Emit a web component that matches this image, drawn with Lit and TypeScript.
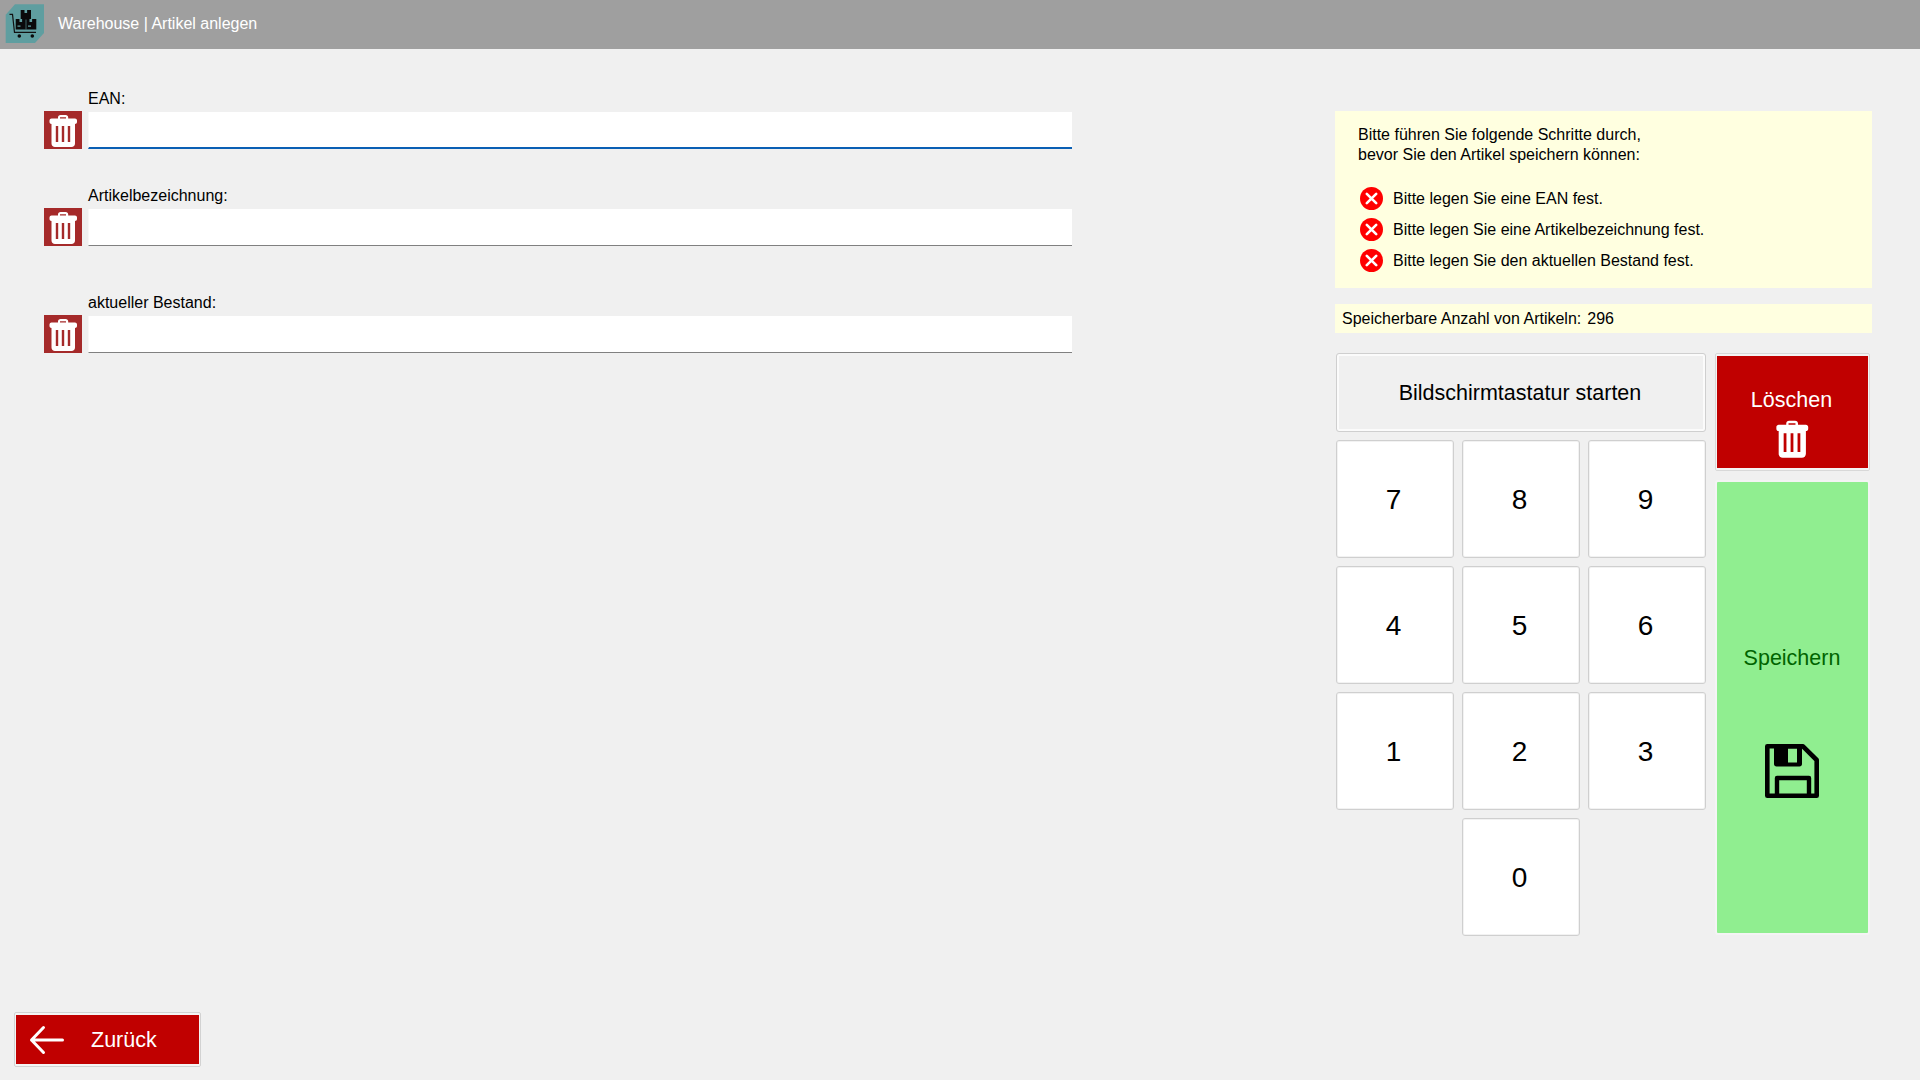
import { LitElement, html, css } from "lit";
import { customElement } from "lit/decorators.js";

const trash = (size: number, slot: string) => html`<svg width=${size} height=${size} viewBox="0 0 38 38" aria-hidden="true">
  <path fill="white" d="M14 6.600C14 5 15 4 16.600 4h5c1.600 0 2.600 1 2.600 2.600V7.500h6.800c1 0 2 .8 2 2v1.500c0 1.200-.8 2-2 2v19.500c0 2-1.500 3.500-3.500 3.500H11c-2 0-3.500-1.500-3.500-3.500V13c-1.200 0-2-.8-2-2V9.500c0-1.200 1-2 2-2H14z"/>
  <path fill=${slot} d="M16 6.300h6V7.500h-6zM11.800 15h2.400v16h-2.400zM17.800 15h2.400v16h-2.400zM23.800 15h2.400v16h-2.400z"/>
</svg>`;

const errorIcon = html`<svg class="err" width="23" height="23" viewBox="0 0 23 23" aria-hidden="true">
  <circle cx="11.500" cy="11.500" r="11.500" fill="#f00"/>
  <path d="M6.800 6.800l9.400 9.400M16.200 6.800l-9.400 9.400" stroke="#fff" stroke-width="2.600" stroke-linecap="round"/>
</svg>`;

const logo = html`<svg width="40" height="40" viewBox="0 0 40 40" aria-hidden="true">
  <path fill="#5f9ea0" d="M10 .3H39V29L30 39H.7V10.700z"/>
  <path fill="none" stroke="#111" stroke-width="1.200" d="M4.500 10.300H7.500L9.500 28.300H31"/>
  <path fill="#0a0a0a" d="M15.700 6H26V15H31.300V25.500H10.700V15H15.700z"/>
  <circle fill="#0a0a0a" cx="14.300" cy="32" r="1.800"/><circle fill="#0a0a0a" cx="27.300" cy="32" r="1.800"/>
  <path fill="#5f9ea0" d="M19.500 6h2.600v3h-2.600zM14.500 15h2.600v3h-2.600zM24.500 15h2.600v3h-2.600zM12.500 21.500h3v1.300h-3zM23 21.500h3v1.300h-3z"/>
  <path stroke="#5f9ea0" stroke-width=".6" d="M21 15.500V25.500"/>
</svg>`;

const disk = html`<svg width="56" height="56" viewBox="-1 -1 56 56" aria-hidden="true">
  <path fill="none" stroke="#000" stroke-width="4.600" stroke-linejoin="round" d="M2.300 2.300H38L51.700 16V51.700H2.300z"/>
  <path fill-rule="evenodd" fill="#000" d="M9 1H37V20C37 21.500 36 22.500 34.500 22.500H11.500C10 22.500 9 21.500 9 20zM23 4.500V18.500H32V4.500z"/>
  <path fill="none" stroke="#000" stroke-width="4.400" stroke-linejoin="round" d="M12 52V34H44V52"/>
</svg>`;

const arrow = html`<svg width="36" height="30" viewBox="0 0 36 30" aria-hidden="true">
  <path fill="none" stroke="#fff" stroke-width="3" stroke-linecap="round" stroke-linejoin="round" d="M33.500 15H2.500M14.500 2.500L2.500 15L14.500 27.500"/>
</svg>`;

@customElement("app-root")
export class AppRoot extends LitElement {
  static styles = css`
    :host {
      display: flex;
      flex-direction: column;
      width: 1920px;
      height: 1080px;
      background: #f0f0f0;
      color: #000;
      font-family: "Liberation Sans", Arial, sans-serif;
      font-size: 16px;
      overflow: hidden;
    }
    * { box-sizing: border-box; }
    .header {
      height: 49px;
      flex: none;
      background: #9f9f9f;
      display: flex;
      align-items: center;
      padding-left: 5px;
      gap: 13px;
      color: #fff;
    }
    .header span { margin-bottom: 2px; }
    .header svg { display: block; flex: none; margin-bottom: 1px; }
    .main {
      flex: 1;
      display: flex;
      justify-content: space-between;
      padding: 0 48px 0 44px;
      min-height: 0;
    }
    .form { width: 1028px; padding-top: 39px; }
    .field { margin-bottom: 36px; }
    .field.last { margin-top: 46px; }
    .label { height: 23px; line-height: 21px; padding-left: 44px; }
    .field-row { display: flex; gap: 6px; height: 38px; }
    .tile {
      width: 38px; height: 38px; background: #a52a2a; flex: none;
    }
    .tile svg { display: block; }
    .input {
      flex: 1;
      height: 37px;
      margin-top: 1px;
      background: #fff;
      border: 0;
      border-left: 1px solid #f8f8f8;
      border-bottom: 1px solid #808080;
      padding: 0 8px;
      outline: none;
      font: inherit;
    }
    .input.focus { border-bottom: 2px solid #0a5fb4; }
    .side { width: 537px; padding-top: 62px; }
    .notice {
      background: #ffffe0;
      height: 177px;
      padding: 14px 23px;
      line-height: 20px;
    }
    .notice .intro { margin-bottom: 18px; }
    .check {
      display: flex;
      align-items: center;
      gap: 10px;
      height: 31px;
      padding-left: 2px;
    }
    .check span { margin-top: 1px; }
    .err { display: block; flex: none; }
    .count {
      background: #ffffe0;
      height: 29px;
      margin-top: 16px;
      line-height: 29px;
      padding-left: 7px;
    }
    .count span { margin-left: 6px; }
    .pad {
      display: grid;
      grid-template-columns: 372px 155px;
      column-gap: 7px;
      margin-top: 20px;
      margin-left: 1px;
    }
    .keys {
      display: grid;
      grid-template-columns: repeat(3, 118px);
      grid-template-rows: 79px repeat(4, 118px);
      gap: 8px;
      align-content: start;
    }
    .btn {
      font: inherit;
      color: #000;
      border: 1px solid #cfcfcf;
      border-radius: 3px;
      padding: 0;
      margin: 0;
      cursor: pointer;
    }
    .key {
      background: #fff;
      font-size: 28px;
      padding: 2px 3px 0 0;
      box-shadow: inset 0 0 0 1px #f2f2f2;
    }
    .key.zero { grid-column: 2; }
    .kbd {
      grid-column: 1 / -1;
      background: #f0f0f0;
      font-size: 21.5px;
      padding: 2px 2px 0 0;
      box-shadow: inset 0 0 0 2px #fbfbfb;
    }
    .actions {
      display: flex;
      flex-direction: column;
      gap: 9px;
    }
    .del {
      height: 118px;
      background: #c00000;
      color: #fff;
      font-size: 21.5px;
      border-style: solid;
      border-color: #f4f4f4;
      border-width: 3px 2px;
      outline: 1px solid #d8d8d8;
      outline-offset: -1px;
      border-radius: 2px;
      display: flex;
      flex-direction: column;
      align-items: center;
      justify-content: flex-start;
      padding: 32px 2px 0 0;
    }
    .del span { line-height: 24px; }
    .del svg { display: block; margin-top: 4px; }
    .save {
      height: 455px;
      background: #90ee90;
      color: #006400;
      font-size: 21.5px;
      border: 2px solid #f4f4f4;
      display: flex;
      flex-direction: column;
      align-items: center;
      padding: 164px 1px 0 0;
    }
    .save span { line-height: 24px; }
    .save svg { display: block; margin-top: 73px; }
    .footer { flex: none; height: 68px; padding-left: 14px; }
    .back {
      width: 187px;
      height: 55px;
      background: #c00000;
      color: #fff;
      font-size: 21.5px;
      border-style: solid;
      border-color: #f4f4f4;
      border-width: 3px 2px;
      outline: 1px solid #d2d2d2;
      outline-offset: -1px;
      border-radius: 2px;
      display: flex;
      align-items: center;
      padding: 0 0 0 13px;
      gap: 26px;
    }
    .back svg { display: block; flex: none; }
    .back span { margin-top: 1px; }
  `;

  private field(label: string, cls = "", inputCls = "") {
    return html`<div class="field ${cls}">
      <div class="label">${label}</div>
      <div class="field-row">
        <div class="tile">${trash(38, "#a52a2a")}</div>
        <input class="input ${inputCls}" aria-label=${label} />
      </div>
    </div>`;
  }

  render() {
    const digits = ["7", "8", "9", "4", "5", "6", "1", "2", "3"];
    const checks = [
      "Bitte legen Sie eine EAN fest.",
      "Bitte legen Sie eine Artikelbezeichnung fest.",
      "Bitte legen Sie den aktuellen Bestand fest.",
    ];
    return html`
      <header class="header">${logo}<span>Warehouse | Artikel anlegen</span></header>
      <main class="main">
        <section class="form">
          ${this.field("EAN:", "", "focus")}
          ${this.field("Artikelbezeichnung:", "")}
          ${this.field("aktueller Bestand:", "last")}
        </section>
        <aside class="side">
          <div class="notice">
            <div class="intro">Bitte führen Sie folgende Schritte durch,<br />bevor Sie den Artikel speichern können:</div>
            ${checks.map((c) => html`<div class="check">${errorIcon}<span>${c}</span></div>`)}
          </div>
          <div class="count">Speicherbare Anzahl von Artikeln:<span>296</span></div>
          <div class="pad">
            <div class="keys">
              <button class="btn kbd">Bildschirmtastatur starten</button>
              ${digits.map((d) => html`<button class="btn key">${d}</button>`)}
              <button class="btn key zero">0</button>
            </div>
            <div class="actions">
              <button class="btn del"><span>Löschen</span>${trash(44, "#c00000")}</button>
              <button class="btn save"><span>Speichern</span>${disk}</button>
            </div>
          </div>
        </aside>
      </main>
      <footer class="footer">
        <button class="btn back">${arrow}<span>Zurück</span></button>
      </footer>
    `;
  }
}
